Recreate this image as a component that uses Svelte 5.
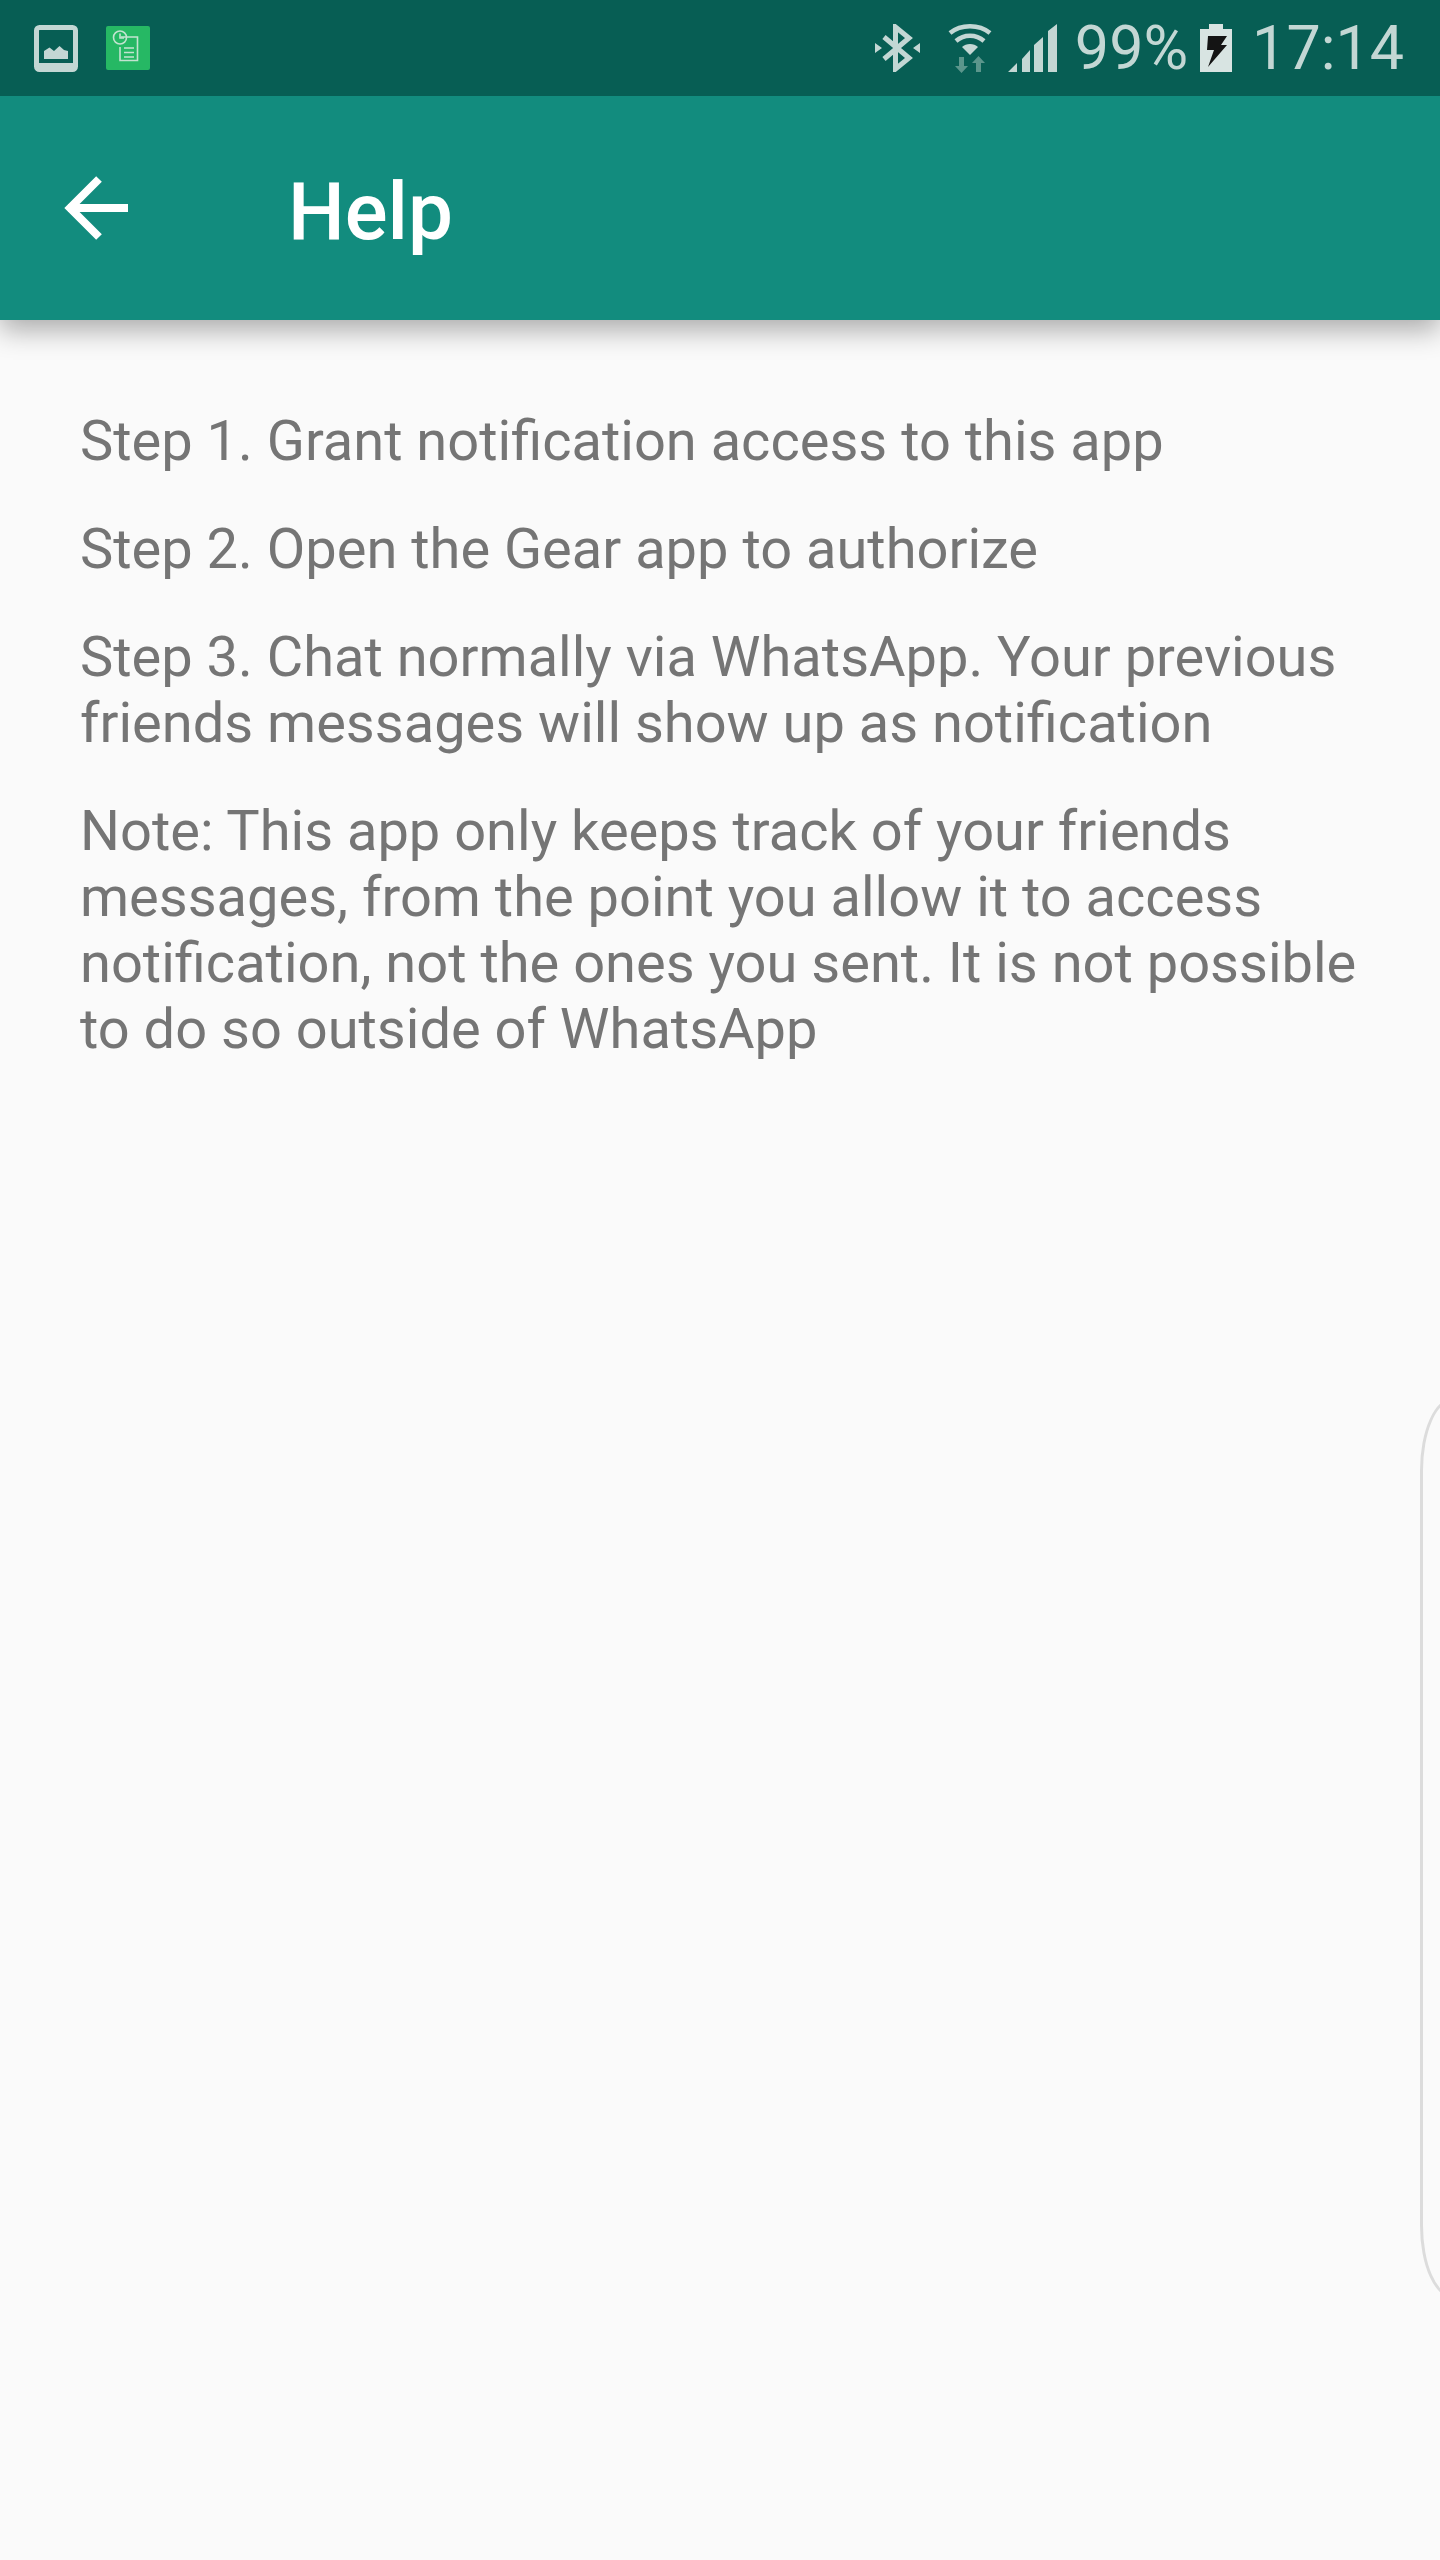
<script>
  const steps = [
    "Step 1. Grant notification access to this app",
    "Step 2. Open the Gear app to authorize",
    "Step 3. Chat normally via WhatsApp. Your previous friends messages will show up as notification",
    "Note: This app only keeps track of your friends messages, from the point you allow it to access notification, not the ones you sent. It is not possible to do so outside of WhatsApp",
  ];
</script>

<div class="screen">
  <header>
    <div class="status">
      <div class="left">
        <svg class="gallery" width="44" height="47" viewBox="0 0 44 47">
          <rect x="2.5" y="2.5" width="39" height="42" rx="3" fill="none" stroke="#c3d7d4" stroke-width="5" />
          <rect x="5" y="38" width="34" height="5" fill="#c3d7d4" />
          <path d="M10 34V26L15.5 22.5L20 26L25.5 21L30 25L34 26V34Z" fill="#c3d7d4" />
        </svg>
        <div class="notif">
          <svg width="44" height="44" viewBox="0 0 44 44" fill="none" stroke="#c3e3d0" stroke-width="1.6">
            <path d="M15 11H31.5V34.5H14V21" />
            <circle cx="14" cy="11.5" r="6.5" />
            <path d="M14 7.5V12H18M18 22H28M18 26.5H28M18 31H28" />
          </svg>
        </div>
      </div>
      <div class="right">
        <svg class="bt" width="46" height="48" viewBox="0 0 46 48" fill="none" stroke="#c3d7d4" stroke-width="5">
          <path d="M9 13L34 34L20.5 45V3L34 14L9 35" />
          <path d="M0 19L7 24L0 29Z M45 19L38 24L45 29Z" fill="#c3d7d4" stroke="none" />
        </svg>
        <svg class="wifi" width="44" height="50" viewBox="0 0 44 50">
          <g fill="none" stroke="#c3d7d4" stroke-width="4.5">
            <path d="M2 10C13 1 31 1 42 10" />
            <path d="M8 18C16 11 28 11 36 18" />
          </g>
          <path d="M14 24C18 20 26 20 30 24L22 32Z" fill="#c3d7d4" />
          <path d="M11 34H16V43H20L13.5 50L7 43H11Z M28 49V40H24L30.5 33L37 40H33V49Z" fill="#5b968c" />
        </svg>
        <svg class="signal" width="49" height="48" viewBox="0 0 49 48" fill="#c3d7d4">
          <path d="M0 48L9 39V48Z M14 48V35L22 26V48Z M26 48V21L35 13V48Z M40 48V7L49 0V48Z" />
        </svg>
        <span class="pct">99%</span>
        <svg class="batt" width="32" height="48" viewBox="0 0 32 48">
          <path d="M9 0H23V5H32V48H0V5H9Z" fill="#d8e4e2" />
          <path d="M8 12H27L21 21H27L8 43L14 26H7Z" fill="#141414" />
        </svg>
        <span class="time">17:14</span>
      </div>
    </div>
    <div class="bar">
      <svg class="back" width="64" height="64" viewBox="0 0 64 64" fill="none" stroke="#fff" stroke-width="8">
        <path d="M64 32H4M35 3L6 32L35 61" />
      </svg>
      <h1>Help</h1>
    </div>
  </header>

  <main>
    {#each steps as step}
      <p>{step}</p>
    {/each}
  </main>

  <div class="edge"></div>
</div>

<style>
  :global(body) {
    margin: 0;
    background: #fafafa;
  }

  .screen {
    position: relative;
    height: 2560px;
    overflow: hidden;
    background: #fafafa;
    font-family: Roboto, sans-serif;
  }

  header {
    box-shadow: 0 10px 26px rgba(0, 0, 0, 0.32);
  }

  .status {
    height: 96px;
    background: #075e54;
    display: flex;
    justify-content: space-between;
    align-items: center;
    padding: 0 36px 0 34px;
    color: #c3d7d4;
  }

  .left,
  .right {
    display: flex;
    align-items: center;
  }

  .left {
    gap: 28px;
  }

  .notif {
    width: 44px;
    height: 44px;
    background: #26b864;
    border-radius: 2px;
  }

  .notif svg,
  .right svg {
    display: block;
  }

  .wifi {
    margin-left: 27px;
  }

  .signal {
    margin-left: 16px;
  }

  .pct,
  .time {
    font-size: 61px;
    line-height: 70px;
  }

  .pct {
    margin-left: 18px;
  }

  .batt {
    margin-left: 12px;
  }

  .time {
    margin-left: 20px;
  }

  .bar {
    height: 224px;
    background: #128c7e;
    display: flex;
    align-items: center;
    padding-left: 64px;
  }

  .back {
    flex: none;
  }

  h1 {
    margin: 8px 0 0 160px;
    font-size: 80px;
    font-weight: 500;
    color: #fff;
  }

  main {
    padding: 88px 80px 0;
  }

  p {
    margin: 0 0 42px;
    font-size: 56px;
    line-height: 66px;
    color: #757575;
  }

  .edge {
    position: absolute;
    top: 1398px;
    right: -46px;
    width: 60px;
    height: 894px;
    border: 3px solid #dcdcdc;
    border-radius: 50px / 110px;
  }
</style>
